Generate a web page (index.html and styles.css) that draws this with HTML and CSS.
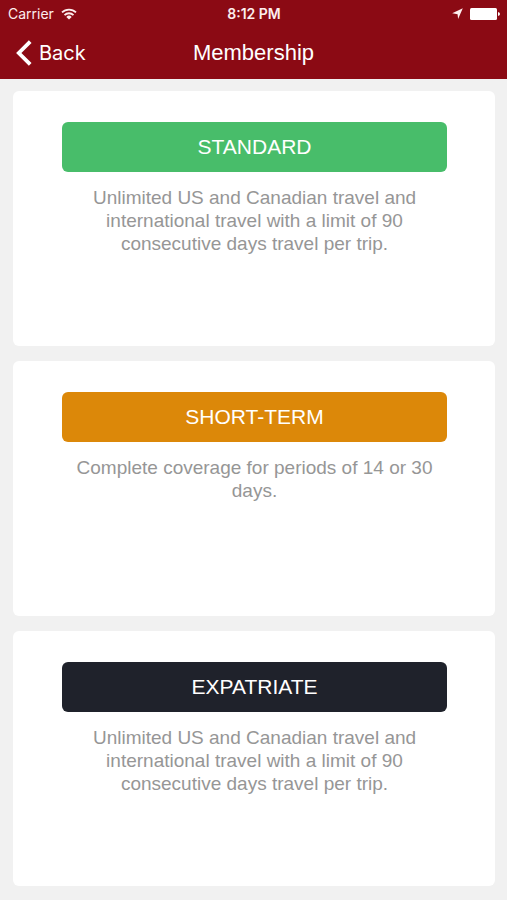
FILE: index.html
```html
<!DOCTYPE html>
<html lang="en">
<head>
<meta charset="utf-8">
<meta name="viewport" content="width=device-width, initial-scale=1">
<title>Membership</title>
<link rel="stylesheet" href="styles.css">
</head>
<body>
<header class="header">
  <div class="status">
    <div class="status-left">
      <span>Carrier</span>
      <svg class="wifi" viewBox="0 0 16 12" aria-hidden="true">
        <path d="M1 4.4a10 10 0 0 1 14 0M3.5 7.1a6.4 6.4 0 0 1 9 0" fill="none" stroke="currentColor" stroke-width="1.8"/>
        <path d="M5.3 8.9a3.9 3.9 0 0 1 5.4 0L8 11.6z" fill="currentColor"/>
      </svg>
    </div>
    <span class="time">8:12 PM</span>
    <div class="status-right">
      <svg class="location" viewBox="0 0 11 11" aria-hidden="true"><path d="M10.8.2 6.1 11 5.6 6.2.2 5.2z" fill="currentColor"/></svg>
      <svg class="battery" viewBox="0 0 30 12" aria-hidden="true"><rect width="27" height="12" rx="1.5" fill="currentColor"/><path d="M28 4q2 .4 2 2t-2 2z" fill="currentColor"/></svg>
    </div>
  </div>
  <nav class="nav">
    <a class="back" href="#">
      <svg class="chevron" viewBox="0 0 16 26" aria-hidden="true"><path d="M14.2 1.6 2.8 13l11.4 11.4" fill="none" stroke="currentColor" stroke-width="3.8"/></svg>
      <span>Back</span>
    </a>
    <h1 class="title">Membership</h1>
  </nav>
</header>
<main class="plans">
  <section class="card">
    <button class="plan standard" type="button">STANDARD</button>
    <p class="description">Unlimited US and Canadian travel and international travel with a limit of 90 consecutive days travel per trip.</p>
  </section>
  <section class="card">
    <button class="plan short-term" type="button">SHORT-TERM</button>
    <p class="description">Complete coverage for periods of 14 or 30 days.</p>
  </section>
  <section class="card">
    <button class="plan expatriate" type="button">EXPATRIATE</button>
    <p class="description">Unlimited US and Canadian travel and international travel with a limit of 90 consecutive days travel per trip.</p>
  </section>
</main>
</body>
</html>
```
FILE: styles.css
```css
* { box-sizing: border-box; }

body {
  margin: 0;
  background: #f1f1f1;
  font-family: "Liberation Sans", Arial, sans-serif;
}

.header {
  background: #8b0a14;
  color: #fff;
}

.status {
  display: grid;
  grid-template-columns: 1fr auto 1fr;
  align-items: center;
  height: 27px;
  padding: 0 7px 0 8px;
  font: 400 14px/16px Inter, sans-serif;
  color: #fdeeee;
}

.status-left,
.status-right {
  display: flex;
  align-items: center;
  gap: 7px;
}

.status-right { justify-content: flex-end; }
.time { font-weight: 600; }
.wifi { width: 16px; height: 12px; }
.location { width: 11px; height: 11px; }
.battery { width: 30px; height: 12px; color: #fff; }

.nav {
  display: grid;
  grid-template-columns: 1fr auto 1fr;
  align-items: center;
  height: 52px;
  padding: 0 16px;
}

.back {
  display: flex;
  align-items: center;
  gap: 7px;
  color: #fff;
  font: 400 20px/24px Inter, sans-serif;
  text-decoration: none;
}

.chevron { width: 16px; height: 26px; }

.title {
  margin: 0;
  font-size: 22px;
  font-weight: 400;
  line-height: 28px;
}

.plans {
  display: grid;
  gap: 15px;
  padding: 12px 12px 14px 13px;
}

.card {
  min-height: 255px;
  padding: 31px 48px 24px 49px;
  border-radius: 6px;
  background: #fff;
  text-align: center;
}

.plan {
  display: block;
  width: 100%;
  height: 50px;
  padding: 0;
  border: 0;
  border-radius: 6px;
  color: #fff;
  font: 400 21px/26px "Liberation Sans", Arial, sans-serif;
}

.standard { background: #48bd6a; }
.short-term { background: #dc8809; }
.expatriate { background: #1f222b; }

.description {
  margin: 14px 0 0;
  padding: 0 8px;
  color: #969696;
  font-size: 19px;
  line-height: 23px;
}
```
